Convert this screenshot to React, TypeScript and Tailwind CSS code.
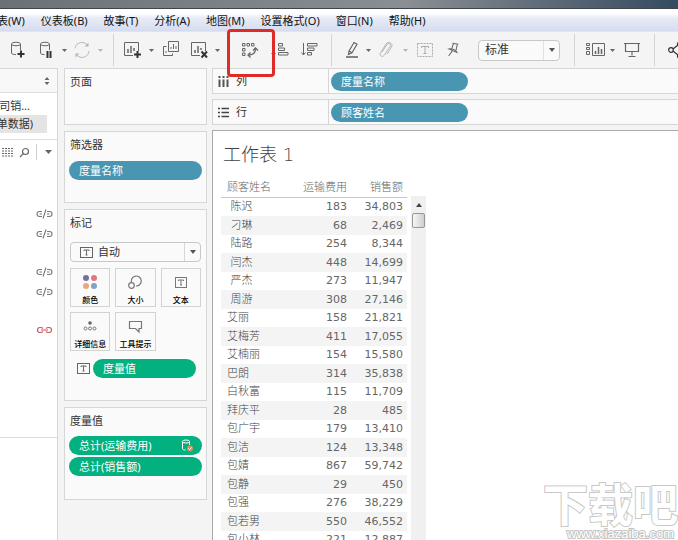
import type { ReactNode } from "react";

const MENUS = ["工作表(W)", "仪表板(B)", "故事(T)", "分析(A)", "地图(M)", "设置格式(O)", "窗口(N)", "帮助(H)"];

const ROWS: [string, string, string][] = [
  [" 陈迟", "183", "34,803"],
  [" 刁琳", "68", "2,469"],
  [" 陆路", "254", "8,344"],
  [" 闫杰", "448", "14,699"],
  [" 严杰", "273", "11,947"],
  [" 周游", "308", "27,146"],
  ["艾丽", "158", "21,821"],
  ["艾梅芳", "411", "17,055"],
  ["艾楠丽", "154", "15,580"],
  ["巴朗", "314", "35,838"],
  ["白秋富", "115", "11,709"],
  ["拜庆平", "28", "485"],
  ["包广宇", "179", "13,410"],
  ["包洁", "124", "13,348"],
  ["包婧", "867", "59,742"],
  ["包静", "29", "450"],
  ["包强", "276", "38,229"],
  ["包若男", "550", "46,552"],
  ["包小林", "221", "12,887"],
];

function Tool({ label, className = "", children }: { label: string; className?: string; children: ReactNode }) {
  return (
    <button type="button" aria-label={label} className={`flex h-5 w-5 shrink-0 items-center justify-center text-[#666] ${className}`}>
      <svg width="20" height="20" viewBox="0 0 20 20" fill="none" stroke="currentColor" strokeWidth="1">
        {children}
      </svg>
    </button>
  );
}

function Caret({ label, className = "" }: { label: string; className?: string }) {
  return (
    <button type="button" aria-label={label} className={`flex h-5 w-3 shrink-0 items-center justify-center text-[#666] ${className}`}>
      <svg width="5" height="3" viewBox="0 0 5 3" fill="currentColor">
        <path d="M0 0h5L2.5 3z" />
      </svg>
    </button>
  );
}

function Separator({ className = "" }: { className?: string }) {
  return <div className={`h-8 w-px shrink-0 bg-[#d4d4d4] ${className}`} />;
}

function TextMark({ size }: { size: number }) {
  return (
    <svg width={size} height={size} viewBox="0 0 13 13" fill="none" stroke="#666" className="shrink-0">
      <rect x="0.5" y="1.5" width="12" height="10" />
      <path d="M4 5V4h5v1M6.5 4v5M5.5 9h2" />
    </svg>
  );
}

function Toolbar() {
  return (
    <div className="flex h-[37px] shrink-0 items-center border-t border-[#e4e4e4] bg-[#f4f4f4]">
      <Tool label="新建数据源" className="ml-2">
        <ellipse cx="8" cy="4" rx="4.5" ry="1.8" />
        <path d="M3.500 4v9c0 1 2 1.600 4.500 1.600M12.500 4v6" />
        <path d="M13 10.500v7M9.500 14h7" stroke="#333" strokeWidth="2" />
      </Tool>
      <Tool label="暂停自动更新" className="ml-2">
        <ellipse cx="9" cy="4" rx="4.5" ry="1.8" />
        <path d="M4.500 4v9c0 1 2 1.600 4 1.600M13.500 4v6" />
        <path d="M11.500 11v7M14.500 11v7" stroke="#333" strokeWidth="2" />
      </Tool>
      <Caret label="更新选项" className="ml-0.5" />
      <Tool label="运行更新" className="ml-0.5 text-[#b8b8b8]">
        <path d="M3 8.500a7 7 0 0 1 13-2.500M17 11a7 7 0 0 1-13 3" />
        <path d="M16.500 2.500V6.500h-4zM3.500 17.500V13.500h4z" fill="currentColor" stroke="none" />
      </Tool>
      <Caret label="刷新选项" className="ml-0.5 text-[#b8b8b8]" />
      <Separator className="ml-[7px]" />
      <Tool label="新建工作表" className="ml-2">
        <path d="M11 15.500H2.500v-13h14V11" />
        <path d="M6 13V9M9 13V6M12 11V8" strokeWidth="1.500" />
        <path d="M15.500 11v7M12 14.500h7" stroke="#333" strokeWidth="2" />
      </Tool>
      <Caret label="新建选项" className="ml-[3px]" />
      <Tool label="复制工作表" className="ml-1">
        <path d="M7.500 1.500h10v10h-10z" />
        <path d="M10 9V7M12.500 9V4M15 9V6M5.500 6.500h-3v9h9v-2M5 13v-2" />
      </Tool>
      <Tool label="清除工作表" className="ml-2">
        <path d="M11 15.500H2.500v-13h14V11" />
        <path d="M6 13V10M9 13V6M12 10V8" strokeWidth="1.500" />
        <path d="M12.500 11.500l5.500 6M18 11.500l-5.500 6" stroke="#333" strokeWidth="2" />
      </Tool>
      <Caret label="清除选项" className="ml-0.5" />
      <div className="relative ml-[17px] flex">
        <Tool label="交换行和列">
          <path d="M2.500 3.500h2.500v2.500h-2.500zM7 3.500h2.500v2.500h-2.500zM11.500 3.500h2.500v2.500h-2.500zM2.500 8.500h2.500v2.500h-2.500zM2.500 13h2.500v2.500h-2.500z" />
          <path d="M15.500 8.500c0 4-2 6.500-7 6.500" strokeWidth="1.300" />
          <path d="M13 10.500L15.500 8l2.500 2.500M10.500 12.500L8 15l2.500 2.500" strokeWidth="1.300" />
        </Tool>
        <span className="pointer-events-none absolute -top-[11px] -left-[13px] z-10 h-12 w-12 rounded-sm border-[3px] border-[#df2b25]" />
      </div>
      <Tool label="升序排序" className="ml-2.5">
        <path d="M3.500 4v11M1.500 13l2 2.500 2-2.500M8.500 3.500h4V6h-4zM8.500 8h6v2.500h-6zM8.500 12.500h9.500V15H8.500z" />
      </Tool>
      <Tool label="降序排序" className="ml-[9px]">
        <path d="M4.500 3v12M2.500 12.500l2 2.500 2-2.500M8.500 3.500H18V6H8.500zM8.500 8h6.500v2.500H8.500zM8.500 12.500h4V15h-4z" />
      </Tool>
      <Separator className="ml-3" />
      <Tool label="突出显示" className="ml-2.5">
        <path d="M7 11l5-8.500 3 1.800-5 8.500-3.500 1.700zM7 11l3 1.800" strokeWidth="1.200" />
        <path d="M4 17h12" strokeWidth="1.600" />
      </Tool>
      <Caret label="突出显示选项" />
      <Tool label="组成员" className="ml-0.5 text-[#b5b5b5]">
        <path d="M6 12l5-7.500c1.500-2 4.500-.5 3.200 1.800L8.500 15c-2 2.800-5.500.8-4-2l5.500-9c2.500-3.500 7.500-.5 5.500 3.200L11 14" />
      </Tool>
      <Caret label="组选项" className="ml-[3px] text-[#b5b5b5]" />
      <Tool label="显示标记标签" className="ml-1 text-[#aaa]">
        <rect x="2.500" y="3.500" width="15" height="13" strokeDasharray="2 1" />
        <path d="M6.500 8V6.500h7V8M10 6.500v7M8.500 13.500h3" />
      </Tool>
      <Tool label="固定轴" className="ml-2">
        <path d="M8.500 3.500h6M9.500 3.500l-1 6M13.500 3.500l-.5 6.500M5.500 9.500c2-1 7-.5 9 2.500zM9.500 11L6.500 16.500" transform="rotate(8 10 10)" />
      </Tool>
      <div className="relative ml-[15px] flex h-[21px] w-[82px] shrink-0">
        <select aria-label="适合" className="h-full w-full appearance-none rounded-sm border border-[#c8c8c8] bg-[#fafafa] pl-1.5 text-xs text-[#333]">
          <option>标准</option>
        </select>
        <span className="pointer-events-none absolute inset-y-px right-px flex w-4 items-center justify-center border-l border-[#e2e2e2]">
          <svg width="6" height="4" viewBox="0 0 6 4" fill="#555"><path d="M0 0h6L3 4z" /></svg>
        </span>
      </div>
      <Separator className="ml-3.5" />
      <Tool label="显示卡片" className="ml-[11px]">
        <path d="M.5 3.500h3v2h-3zM.5 7.500h3v2h-3zM.5 11.500h3v3h-3zM6.500 3.500h12v12h-12z" />
        <path d="M9.500 14v-3M12.500 14V7M15.500 14V9" strokeWidth="1.500" />
      </Tool>
      <Caret label="卡片选项" />
      <Tool label="演示模式" className="ml-1">
        <path d="M2 3.500h16M3.500 3.500v8h13v-8M10 11.500v4M6.500 16.500h7" strokeWidth="1.200" />
      </Tool>
      <Separator className="ml-3" />
      <Tool label="共享" className="ml-3">
        <g stroke="#333" strokeWidth="1.200">
          <circle cx="4" cy="10" r="2.300" />
          <path d="M6 9l5-4M6 11l5 4" />
          <circle cx="12.500" cy="4" r="2" />
          <circle cx="12.500" cy="16" r="2" />
        </g>
      </Tool>
    </div>
  );
}

function LinkIcon({ joined = false }: { joined?: boolean }) {
  return (
    <svg width="17" height="10" viewBox="0 0 17 10" fill="none" stroke={joined ? "#d0505c" : "#777"} strokeWidth="1.100">
      {joined ? (
        <path d="M7 3.500C6.500 2.500 5 2.500 4 2.500a2.500 2.500 0 0 0 0 5c1.500 0 2.500 0 3-1M10 3.500c.5-1 2-1 3-1a2.500 2.500 0 0 1 0 5c-1.500 0-2.500 0-3-1M5 5h7" />
      ) : (
        <path d="M6 2.500H3.500a2.200 2.200 0 0 0 0 5H6M3.500 5H6M7 9.500L10 .5M11 2.500h2.500a2.200 2.200 0 0 1 0 5H11M11 5h2.500" />
      )}
    </svg>
  );
}

function DataPane() {
  return (
    <aside className="flex w-[58px] shrink-0 flex-col border-t border-r border-[#d6d6d6] bg-white">
      <div className="flex h-6 shrink-0 items-center justify-end border-b border-[#dedede] bg-[#f8f8f8] pr-[7px]">
        <svg width="6" height="8" viewBox="0 0 6 8" fill="#666"><path d="M3 0l2.500 3h-5zM3 8L.5 5h5z" /></svg>
      </div>
      <div className="flex h-[47px] shrink-0 flex-col border-b border-[#dedede] pt-1 text-[11px] text-[#333]">
        <div className="flex h-[18px] w-[30px] items-center justify-end self-start whitespace-nowrap">公司销...</div>
        <div className="flex h-[18px] w-[47px] items-center justify-end bg-[#e4e4e4] pr-3.5 whitespace-nowrap">(订单数据)</div>
      </div>
      <div className="flex h-6 shrink-0 items-center pl-0.5 text-[#666]">
        <button type="button" aria-label="查看数据">
          <svg width="11" height="9" viewBox="0 0 11 9" stroke="currentColor"><path d="M0 .5h11M0 3h11M0 5.500h11M0 8h11" strokeDasharray="2 1" /></svg>
        </button>
        <button type="button" aria-label="查找字段" className="ml-1.5">
          <svg width="11" height="11" viewBox="0 0 11 11" fill="none" stroke="currentColor" strokeWidth="1.200"><circle cx="6.500" cy="4.500" r="3" /><path d="M4.300 6.700L1 10" /></svg>
        </button>
        <div className="ml-1.5 h-4 w-px bg-[#ccc]" />
        <button type="button" aria-label="字段选项" className="ml-2">
          <svg width="7" height="4" viewBox="0 0 7 4" fill="currentColor"><path d="M0 0h7L3.500 4z" /></svg>
        </button>
      </div>
      <div className="flex h-[274px] shrink-0 flex-col items-end border-b border-[#dedede] pt-10 pr-1">
        <div className="flex h-5 items-center"><LinkIcon /></div>
        <div className="flex h-5 items-center"><LinkIcon /></div>
        <div className="mt-[18px] flex h-5 items-center"><LinkIcon /></div>
        <div className="flex h-5 items-center"><LinkIcon /></div>
        <div className="mt-[18px] flex h-5 items-center"><LinkIcon joined /></div>
      </div>
    </aside>
  );
}

function Card({ title, className = "", children }: { title: string; className?: string; children?: ReactNode }) {
  return (
    <section className={`shrink-0 border border-[#d6d6d6] bg-[#fafafa] ${className}`}>
      <h2 className="px-[5px] pt-1 text-[11px] leading-[18px] text-[#333]">{title}</h2>
      {children}
    </section>
  );
}

function Pill({ className = "", children }: { className?: string; children: ReactNode }) {
  return (
    <button type="button" className={`flex h-[19px] items-center rounded-full px-2.5 text-[11px] leading-none text-white ${className}`}>
      {children}
    </button>
  );
}

function MarkButton({ label, children }: { label: string; children: ReactNode }) {
  return (
    <button type="button" className="flex h-[39px] flex-col items-center justify-end border border-[#d2d2d2] bg-[#fafafa] text-[8px] leading-3 font-medium whitespace-nowrap text-black">
      <svg width="18" height="18" viewBox="0 0 18 18" fill="none" stroke="#777" className="mb-[3px]">{children}</svg>
      {label}
    </button>
  );
}

function CardsColumn() {
  return (
    <div className="flex w-[143px] shrink-0 flex-col gap-1.5">
      <Card title="页面" className="h-[57px]" />
      <Card title="筛选器" className="h-[72px]">
        <div className="mt-[7px] px-1"><Pill className="w-full bg-[#4996b2]">度量名称</Pill></div>
      </Card>
      <Card title="标记" className="h-[192px]">
        <div className="relative mx-[5px] mt-2.5 flex h-5">
          <select aria-label="标记类型" className="h-full w-full appearance-none rounded-sm border border-[#c8c8c8] bg-[#fafafa] pl-[27px] text-[11px] text-[#333]">
            <option>自动</option>
          </select>
          <span className="pointer-events-none absolute inset-y-0 left-2.5 flex items-center"><TextMark size={13} /></span>
          <span className="pointer-events-none absolute inset-y-px right-px flex w-4 items-center justify-center border-l border-[#d6d6d6]">
            <svg width="6" height="4" viewBox="0 0 6 4" fill="#555"><path d="M0 0h6L3 4z" /></svg>
          </span>
        </div>
        <div className="mx-[5px] mt-1.5 grid grid-cols-3 gap-[5px]">
          <MarkButton label="颜色">
            <g stroke="none">
              <circle cx="5" cy="5" r="3" fill="#75729a" />
              <circle cx="13" cy="5" r="3" fill="#e57580" />
              <circle cx="5" cy="13" r="3" fill="#eba77c" />
              <circle cx="13" cy="13" r="3" fill="#7fa3c5" />
            </g>
          </MarkButton>
          <MarkButton label="大小">
            <path d="M5.500 9.500A5 5 0 1 1 10 13" strokeWidth="1.200" />
            <circle cx="5.500" cy="12.500" r="2.800" strokeWidth="1.200" />
          </MarkButton>
          <MarkButton label="文本">
            <rect x="3.500" y="4.500" width="11" height="10" />
            <path d="M6.500 8V7h5v1M9 7v5M8 12h2" />
          </MarkButton>
          <MarkButton label="详细信息">
            <circle cx="9" cy="6" r="1.800" fill="#666" stroke="none" />
            <circle cx="4.500" cy="11.500" r="1.500" />
            <circle cx="9" cy="11.500" r="1.500" />
            <circle cx="13.500" cy="11.500" r="1.500" />
          </MarkButton>
          <MarkButton label="工具提示">
            <path d="M3.500 4.500h12v7h-2.500v3.500L9.500 11.500h-6z" strokeWidth="1.200" />
          </MarkButton>
        </div>
        <div className="mt-2 flex items-center pr-2.5 pl-3">
          <TextMark size={13} />
          <Pill className="ml-[3px] flex-1 bg-[#03b180]">度量值</Pill>
        </div>
      </Card>
      <Card title="度量值" className="h-[93px]">
        <div className="mt-1.5 flex flex-col gap-0.5 px-1">
          <Pill className="justify-between bg-[#03b180] pr-2">
            总计(运输费用)
            <svg width="13" height="13" viewBox="0 0 13 13" fill="none" stroke="white">
              <path d="M1.500 2.500v7c0 1 1 1.500 3 1.500M8.500 2.500V6" />
              <ellipse cx="5" cy="2.500" rx="3.500" ry="1.500" />
              <circle cx="9" cy="9.500" r="3" fill="#e09050" stroke="none" />
              <path d="M7.500 9.500l1 1 2-2" />
            </svg>
          </Pill>
          <Pill className="bg-[#03b180]">总计(销售额)</Pill>
        </div>
      </Card>
    </div>
  );
}

function Shelf({ label, pill, icon }: { label: string; pill: string; icon: ReactNode }) {
  return (
    <div className="flex h-[26px] shrink-0 items-stretch border-y border-l border-[#d6d6d6] bg-[#fafafa]">
      <div className="flex w-[116px] shrink-0 items-center gap-[7px] border-r border-[#d6d6d6] pl-[5px] text-[11px] text-[#333]">
        {icon}
        {label}
      </div>
      <div className="flex items-center pl-0.5"><Pill className="w-[137px] bg-[#4996b2]">{pill}</Pill></div>
    </div>
  );
}

function Worksheet() {
  return (
    <main className="flex min-h-0 flex-1 flex-col overflow-hidden border-t border-l border-[#aaa] bg-white pl-2">
      <h1 className="shrink-0 pt-2 pl-0.5 font-['DejaVu_Sans','Noto_Sans_CJK_SC',sans-serif] text-lg leading-8 font-light text-[#444]">工作表 1</h1>
      <div className="flex min-h-0 flex-1 items-stretch">
        <div className="w-[186px] shrink-0 overflow-hidden pt-2">
          <table className="w-full table-fixed border-collapse font-['DejaVu_Sans','Noto_Sans_CJK_SC',sans-serif] text-[11px] leading-[18px] text-[#666]">
            <thead>
              <tr className="h-[18px] border-b border-[#c8c8c8]">
                <th scope="col" className="w-[80px] p-0 pl-1.5 text-left font-light">顾客姓名</th>
                <th scope="col" className="w-[46px] p-0 text-right font-light whitespace-nowrap">运输费用</th>
                <th scope="col" className="p-0 pr-1 text-right font-light">销售额</th>
              </tr>
            </thead>
            <tbody>
              {ROWS.map(([name, freight, sales]) => (
                <tr key={name} className="odd:h-[18px] even:h-[19px] even:bg-[#f4f4f4]">
                  <td className="p-0 pl-1.5 font-light whitespace-pre text-[#444]">{name}</td>
                  <td className="p-0 text-right">{freight}</td>
                  <td className="p-0 pr-1 text-right">{sales}</td>
                </tr>
              ))}
            </tbody>
          </table>
        </div>
        <div className="mt-[25px] ml-1 flex w-[15px] shrink-0 flex-col items-center bg-[#f0f0f0]">
          <div className="flex h-[17px] shrink-0 items-center">
            <svg width="6" height="4" viewBox="0 0 6 4" fill="#444"><path d="M3 0l3 4H0z" /></svg>
          </div>
          <div className="h-[15px] w-[13px] shrink-0 rounded-[2px] border border-[#979797] bg-linear-to-r from-[#f6f6f6] to-[#cfcfcf]" />
        </div>
      </div>
    </main>
  );
}

export default function App() {
  return (
    <div className="relative flex h-screen flex-col overflow-hidden bg-[#f4f4f4] font-['Noto_Sans','Noto_Sans_CJK_SC',sans-serif]">
      <div className="h-[9px] shrink-0 border-b border-[#3c444d] bg-linear-to-r from-[#6d7176] via-[#8b8e92] via-60% to-[#364b60]" />
      <nav className="flex h-[22px] shrink-0 items-center gap-4 bg-linear-to-b from-white from-20% via-[#e8ecf7] via-40% to-[#d6dcef] text-[11px] leading-none whitespace-nowrap text-[#111]">
        {MENUS.map((menu, i) => (
          <button key={menu} type="button" className={i === 0 ? "-ml-[25px]" : ""}>{menu}</button>
        ))}
      </nav>
      <Toolbar />
      <div className="flex min-h-0 flex-1">
        <DataPane />
        <div className="flex min-w-0 flex-1 gap-[5px] pl-1.5">
          <CardsColumn />
          <div className="flex min-w-0 flex-1 flex-col gap-[5px]">
            <Shelf
              label="列"
              pill="度量名称"
              icon={<svg width="11" height="11" viewBox="0 0 11 11" stroke="#555" strokeWidth="2"><path d="M1.500 0v2M5.500 0v2M9.500 0v2M1.500 3.500V11M5.500 3.500V11M9.500 3.500V11" /></svg>}
            />
            <Shelf
              label="行"
              pill="顾客姓名"
              icon={<svg width="11" height="11" viewBox="0 0 11 11" stroke="#444" strokeWidth="1.500"><path d="M0 1.500h2M0 5.500h2M0 9.500h2M3.500 1.500H11M3.500 5.500H11M3.500 9.500H11" /></svg>}
            />
            <Worksheet />
          </div>
        </div>
      </div>
      <div className="pointer-events-none absolute right-0 bottom-0 flex flex-col items-end text-white">
        <div className="font-['Noto_Sans_CJK_SC',sans-serif] text-[45px] leading-[48px] font-bold [-webkit-text-stroke:2px_#c8c8c8] [paint-order:stroke_fill]">下载吧</div>
        <div className="pr-1 font-['Liberation_Sans',sans-serif] text-[13px] leading-[13px] [-webkit-text-stroke:2px_#c4c4c4] [paint-order:stroke_fill]">www.xiazaiba.com</div>
      </div>
    </div>
  );
}
